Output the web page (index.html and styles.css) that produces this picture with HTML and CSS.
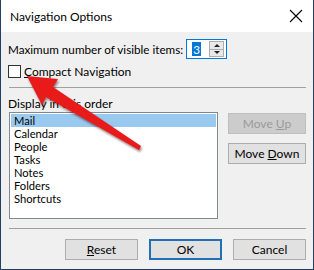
FILE: index.html
```html
<!DOCTYPE html>
<html lang="en">

<head>
	<meta charset="UTF-8" />
	<meta name="viewport" content="width=device-width, initial-scale=1.0" />
	<title>Navigation Options</title>
	<link rel="stylesheet" href="styles.css">
</head>

<body>
	<div class="dialog">
		<div class="titlebar">
			<span class="title">Navigation Options</span>
			<svg class="close" width="14" height="14" viewBox="0 0 14 14">
				<path d="M1 1 L13 13 M13 1 L1 13" stroke="#000" stroke-width="1.1" fill="none" />
			</svg>
		</div>

		<div class="content">
			<div class="row-max">
				<span>Maximum number of visible items:</span>
				<div class="spin">
					<span class="spin-value">3</span>
					<div class="spin-btns">
						<span class="spin-up"></span>
						<span class="spin-down"></span>
					</div>
				</div>
			</div>

			<label class="row-check">
				<span class="checkbox"></span>
				<span><u>C</u>ompact Navigation</span>
			</label>

			<div class="sep sep-top"></div>

			<div class="order-label">Display in this order</div>

			<div class="order">
				<ul class="listbox">
					<li class="selected">Mail</li>
					<li>Calendar</li>
					<li>People</li>
					<li>Tasks</li>
					<li>Notes</li>
					<li>Folders</li>
					<li>Shortcuts</li>
				</ul>
				<div class="side-btns">
					<button class="w-button disabled">Move <u>U</u>p</button>
					<button class="w-button">Move <u>D</u>own</button>
				</div>
			</div>

			<div class="sep sep-bottom"></div>

			<div class="footer">
				<button class="w-button"><u>R</u>eset</button>
				<button class="w-button default">OK</button>
				<button class="w-button">Cancel</button>
			</div>
		</div>

		<!-- annotation arrow -->
		<svg class="arrow" width="314" height="270" viewBox="0 0 314 270">
			<polygon points="27,76 58,79 53,87 141,146 139,150 46,97 42,105" fill="#e81a1a" />
		</svg>
	</div>
</body>

</html>
```

FILE: styles.css
```css
* {
	box-sizing: border-box;
}

body {
	margin: 0;
	font-family: "Lato", "Liberation Sans", sans-serif;
	font-size: 12px;
	color: #000;
}

.dialog {
	position: relative;
	width: 314px;
	height: 270px;
	background: #f0f0f0;
	border: 1px solid #243f63;
	border-top: none;
}

.titlebar {
	height: 32px;
	background: #fff;
	display: flex;
	align-items: center;
	justify-content: space-between;
	padding: 0 10px 0 9px;
}

.title {
	font-size: 12px;
	padding-top: 1px;
}

.content {
	padding: 0 7px 0 7px;
}

/* maximum items row */
.row-max {
	display: flex;
	align-items: center;
	gap: 3px;
	margin-top: 7px;
	height: 20px;
	font-size: 11.7px;
}

.spin {
	display: flex;
	align-items: center;
	width: 41px;
	height: 20px;
	background: #fff;
	border: 1px solid #0078d7;
	padding: 0 2px 0 5px;
}

.spin-value {
	background: #0078d7;
	color: #fff;
	line-height: 14px;
	padding: 0 1px;
}

.spin-btns {
	margin-left: auto;
	display: flex;
	flex-direction: column;
	width: 15px;
	height: 16px;
	border: 1px solid #adadad;
	background: #e9e9e9;
}

.spin-up,
.spin-down {
	flex: 1;
	display: flex;
	align-items: center;
	justify-content: center;
}

.spin-up {
	border-bottom: 1px solid #adadad;
}

.spin-up::after,
.spin-down::after {
	content: "";
	border-left: 3px solid transparent;
	border-right: 3px solid transparent;
}

.spin-up::after {
	border-bottom: 3px solid #222;
}

.spin-down::after {
	border-top: 3px solid #222;
}

/* checkbox row */
.row-check {
	display: flex;
	align-items: center;
	gap: 3px;
	margin-top: 5px;
	height: 14px;
}

.checkbox {
	width: 13px;
	height: 13px;
	border: 1px solid #333;
	background: #fff;
}

/* separators */
.sep {
	height: 1px;
	background: #a0a0a0;
	margin-left: 1px;
}

.sep-top {
	margin-top: 9px;
}

.sep-bottom {
	margin-top: 9px;
}

.order-label {
	margin-top: 8px;
	line-height: 16px;
}

/* list + side buttons */
.order {
	display: flex;
	gap: 10px;
	padding-left: 1px;
}

.listbox {
	list-style: none;
	margin: 0;
	padding: 1px;
	width: 209px;
	height: 107px;
	background: #fff;
	border: 1px solid #828790;
}

.listbox li {
	font-size: 11.2px;
	line-height: 13px;
	padding-left: 3px;
}

.listbox .selected {
	background: #99c9ef;
}

.side-btns {
	display: flex;
	flex-direction: column;
	gap: 9px;
	padding-top: 1px;
}

.w-button {
	font-family: inherit;
	font-size: 12px;
	color: #000;
	width: 78px;
	height: 21px;
	padding: 0;
	background: #e1e1e1;
	border: 1px solid #adadad;
	border-radius: 0;
}

.w-button.disabled {
	background: #cccccc;
	border-color: #bfbfbf;
	color: #9a9a9a;
}

.w-button.default {
	border: 2px solid #2170b5;
}

.footer {
	display: flex;
	justify-content: flex-end;
	gap: 11px;
	margin-top: 10px;
}

.footer .w-button {
	width: 73px;
}

.arrow {
	position: absolute;
	left: -1px;
	top: 0;
	pointer-events: none;
	filter: drop-shadow(1px 2px 1px rgba(60, 0, 0, 0.5));
}
```
